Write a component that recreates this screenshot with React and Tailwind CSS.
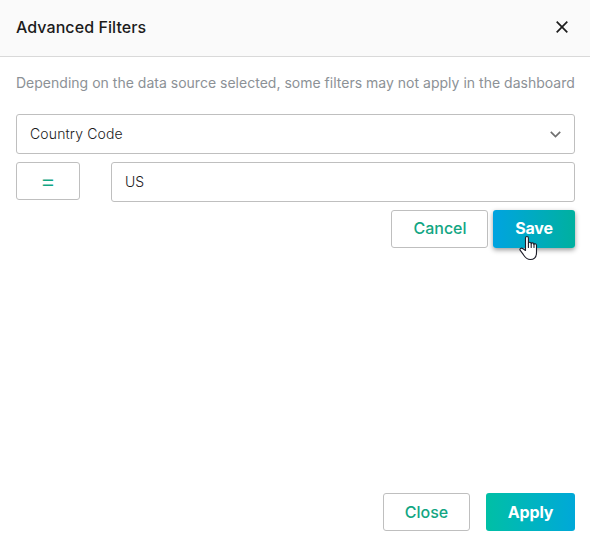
function OutlineButton({ children, className }) {
  return (
    <button
      type="button"
      className={`flex h-[38px] items-center justify-center rounded-[3px] border border-[#bfbfbf] bg-white text-[#12a683] ${className}`}
    >
      {children}
    </button>
  );
}

function HandCursor() {
  return (
    <svg
      className="pointer-events-none absolute left-[26px] top-[25px]"
      width="19"
      height="26"
      viewBox="0 0 19 26"
      fill="#fff"
      stroke="#1c1c28"
      strokeWidth="1.1"
      strokeLinejoin="round"
      strokeLinecap="round"
    >
      <path d="M6.5 15.5V3C6.5 0.9 9.4 0.9 9.4 3V8.5C9.6 6.8 12.1 6.9 12.2 8.8C12.5 7.3 14.9 7.6 15 9.4C15.3 8.2 17.5 8.5 17.5 10.4V17.5C17.5 22 15 24.5 11.3 24.5C7.6 24.5 6 22.2 4.4 19.7L1.1 15.2C0.2 13.6 2.4 12.5 4 13.7Z" />
      <path d="M9.4 8.5V12.5M12.2 8.8V12.5M15 9.4V12.5" fill="none" />
    </svg>
  );
}

export default function App() {
  return (
    <div className="flex h-[544px] w-[590px] flex-col overflow-hidden bg-white font-['Inter',sans-serif] text-[#1c1c1c]">
      <header className="flex h-[57px] shrink-0 items-center justify-between border-b border-[#d9d9d9] bg-[#fafafa] pl-4 pr-[22px] pb-0.5">
        <h1 className="text-base font-medium tracking-[0.07px]">Advanced Filters</h1>
        <button type="button" aria-label="Close dialog">
          <svg width="12" height="12" viewBox="0 0 12 12" stroke="#1c1c1c" strokeWidth="1.7">
            <path d="M0.7 0.7L11.3 11.3M11.3 0.7L0.7 11.3" />
          </svg>
        </button>
      </header>

      <main className="flex flex-1 flex-col px-4 pr-[15px] pt-[15px]">
        <p className="whitespace-nowrap text-sm leading-[22px] tracking-[0.012px] text-[#8c9196]">
          Depending on the data source selected, some filters may not apply in the dashboard
        </p>
        <div className="mt-5 flex h-10 items-center justify-between rounded-[3px] border border-[#bfbfbf] px-[13px] text-sm font-light tracking-[0.14px]">
          <span>Country Code</span>
          <svg width="11" height="7" viewBox="0 0 11 7" fill="none" stroke="#707070" strokeWidth="1.7">
            <path d="M0.8 0.8L5.5 5.5L10.2 0.8" />
          </svg>
        </div>
        <div className="mt-2 flex items-start">
          <OutlineButton className="w-16 text-[25px] leading-none font-light">=</OutlineButton>
          <div className="ml-[31px] flex h-10 flex-1 items-center rounded-[3px] border border-[#bfbfbf] px-[13px] text-sm font-light">
            US
          </div>
        </div>
        <div className="mt-2 flex justify-end gap-[5px]">
          <OutlineButton className="w-[97px] pb-0.5 pl-px text-base font-medium">Cancel</OutlineButton>
          <div className="relative">
            <button
              type="button"
              className="flex h-[38px] w-[82px] items-center justify-center rounded-[3px] bg-linear-to-r from-[#00a3e0] to-[#00b09f] pb-0.5 text-base font-bold tracking-[-0.2px] text-white shadow-[0_2px_5px_rgba(0,0,0,0.4)]"
            >
              Save
            </button>
            <HandCursor />
          </div>
        </div>
      </main>

      <footer className="flex shrink-0 justify-end gap-4 pb-[13px] pr-[15px]">
        <OutlineButton className="w-[87px] text-base font-medium">Close</OutlineButton>
        <button
          type="button"
          className="flex h-[38px] w-[89px] items-center justify-center rounded-[3px] bg-linear-to-r from-[#00bfa5] to-[#00a8d8] text-base font-bold tracking-[-0.2px] text-white"
        >
          Apply
        </button>
      </footer>
    </div>
  );
}
